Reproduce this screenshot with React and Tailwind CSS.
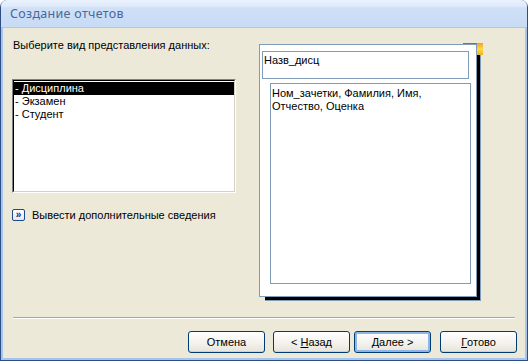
import React from 'react';

const font = { fontFamily: '"Liberation Sans", Arial, sans-serif' };

const XpButton = ({ children, focused }) => (
  <button
    type="button"
    className={
      'h-[22px] w-[77px] rounded-[3px] border border-[#003c74] bg-[linear-gradient(to_bottom,#ffffff_0%,#f4f3ee_50%,#e6e4db_100%)] text-[11px] text-black flex items-center justify-center whitespace-pre ' +
      (focused ? 'shadow-[inset_0_0_0_2px_#8fb4e8]' : 'shadow-[inset_0_-1px_0_#d6d0c0]')
    }
  >
    {children}
  </button>
);

export default function App() {
  const items = ['- Дисциплина', '- Экзамен', '- Студент'];

  return (
    <div className="w-[528px] h-[361px] bg-[#2d4f85] rounded-t-[7px] p-[1px] pt-0" style={font}>
      <div className="h-full flex flex-col rounded-t-[6px] overflow-hidden bg-[#a7c5ec]">
        {/* Title bar */}
        <div className="h-[28px] shrink-0 flex items-center pl-[9px] border-b border-[#a9c9ec] bg-[linear-gradient(to_bottom,#e9f1fc_0%,#e0ebfa_22%,#cfe0f7_30%,#c8dbf5_100%)]">
          <span className="text-[12.5px] text-[#4a6896] tracking-[0.3px] pt-[1px]" style={{ fontFamily: '"Noto Sans", "Open Sans", sans-serif' }}>
            Создание отчетов
          </span>
        </div>

        {/* Body */}
        <div className="flex-1 mx-[2px] mb-[2px] bg-[#ece9d8] flex flex-col">
          <div className="h-[289px] flex">
            {/* Left column */}
            <div className="w-[233px] shrink-0 pl-[9px] pt-[11px] flex flex-col whitespace-nowrap">
              <div className="text-[11px] leading-[13px] text-black pl-[1px]">Выберите вид представления данных:</div>
              <div className="mt-[27px] h-[114px] w-[224px] bg-white border border-[#808080] border-r-white border-b-white">
                <div className="h-full border border-black border-r-[#d4d0c8] border-b-[#d4d0c8] pt-[1px]">
                  {items.map((it, i) => (
                    <div
                      key={it}
                      className={
                        'h-[13px] leading-[13px] text-[11px] pl-[1px] ' +
                        (i === 0 ? 'bg-black text-white' : 'text-black')
                      }
                    >
                      {it}
                    </div>
                  ))}
                </div>
              </div>
              <div className="mt-[14px] flex items-center gap-[7px]">
                <div className="w-[13px] h-[12px] border border-[#1c4a8a] rounded-[2px] bg-[linear-gradient(to_bottom,#ffffff,#dfe8f5)] flex items-center justify-center text-[10px] leading-none text-[#10306a] font-bold">
                  »
                </div>
                <span className="text-[11px] text-black">Вывести дополнительные сведения</span>
              </div>
            </div>

            {/* Preview */}
            <div className="pl-[23px] pt-[16px]">
              <div className="relative w-[222px] h-[257px]">
                {/* shadow */}
                <div className="absolute left-[6px] top-[5px] w-[216px] h-[252px] bg-black border-r border-b border-[#7f9db9]" />
                {/* orange corner */}
                <div className="absolute left-[204px] top-[-1px] w-[20px] h-[3px] bg-[#f04a10]" />
                <div className="absolute left-[218px] top-[-1px] w-[6px] h-[12px] bg-[linear-gradient(to_bottom,#f5a020,#ffd84a,#f0b020)]" />
                <div className="absolute left-0 top-0 w-[218px] h-[253px] bg-white border border-[#7f9db9] flex flex-col">
                  <div className="mt-[6px] ml-[2px] w-[207px] h-[28px] border border-[#7f9db9] text-[11px] leading-[13px] pt-[2px] pl-[1px] text-black">
                    Назв_дисц
                  </div>
                  <div className="mt-[4px] ml-[10px] w-[201px] h-[201px] border border-[#7f9db9] text-[11px] leading-[13px] pt-[3px] pl-[1px] text-black">
                    Ном_зачетки, Фамилия, Имя,
                    <br />
                    Отчество, Оценка
                  </div>
                </div>
              </div>
            </div>
          </div>

          {/* Separator */}
          <div className="mx-[10px] h-[2px] border-t border-[#aca899] border-b border-b-white" />

          {/* Buttons */}
          <div className="mt-[12px] flex justify-end pr-[8px]">
            <XpButton>Отмена</XpButton>
            <div className="w-[8px]" />
            <XpButton>
              {'< '}
              <span className="underline">Н</span>азад
            </XpButton>
            <div className="w-[4px]" />
            <XpButton focused>
              <span className="underline">Д</span>алее {'>'}
            </XpButton>
            <div className="w-[9px]" />
            <XpButton>
              <span className="underline">Г</span>отово
            </XpButton>
          </div>
        </div>
      </div>
    </div>
  );
}
